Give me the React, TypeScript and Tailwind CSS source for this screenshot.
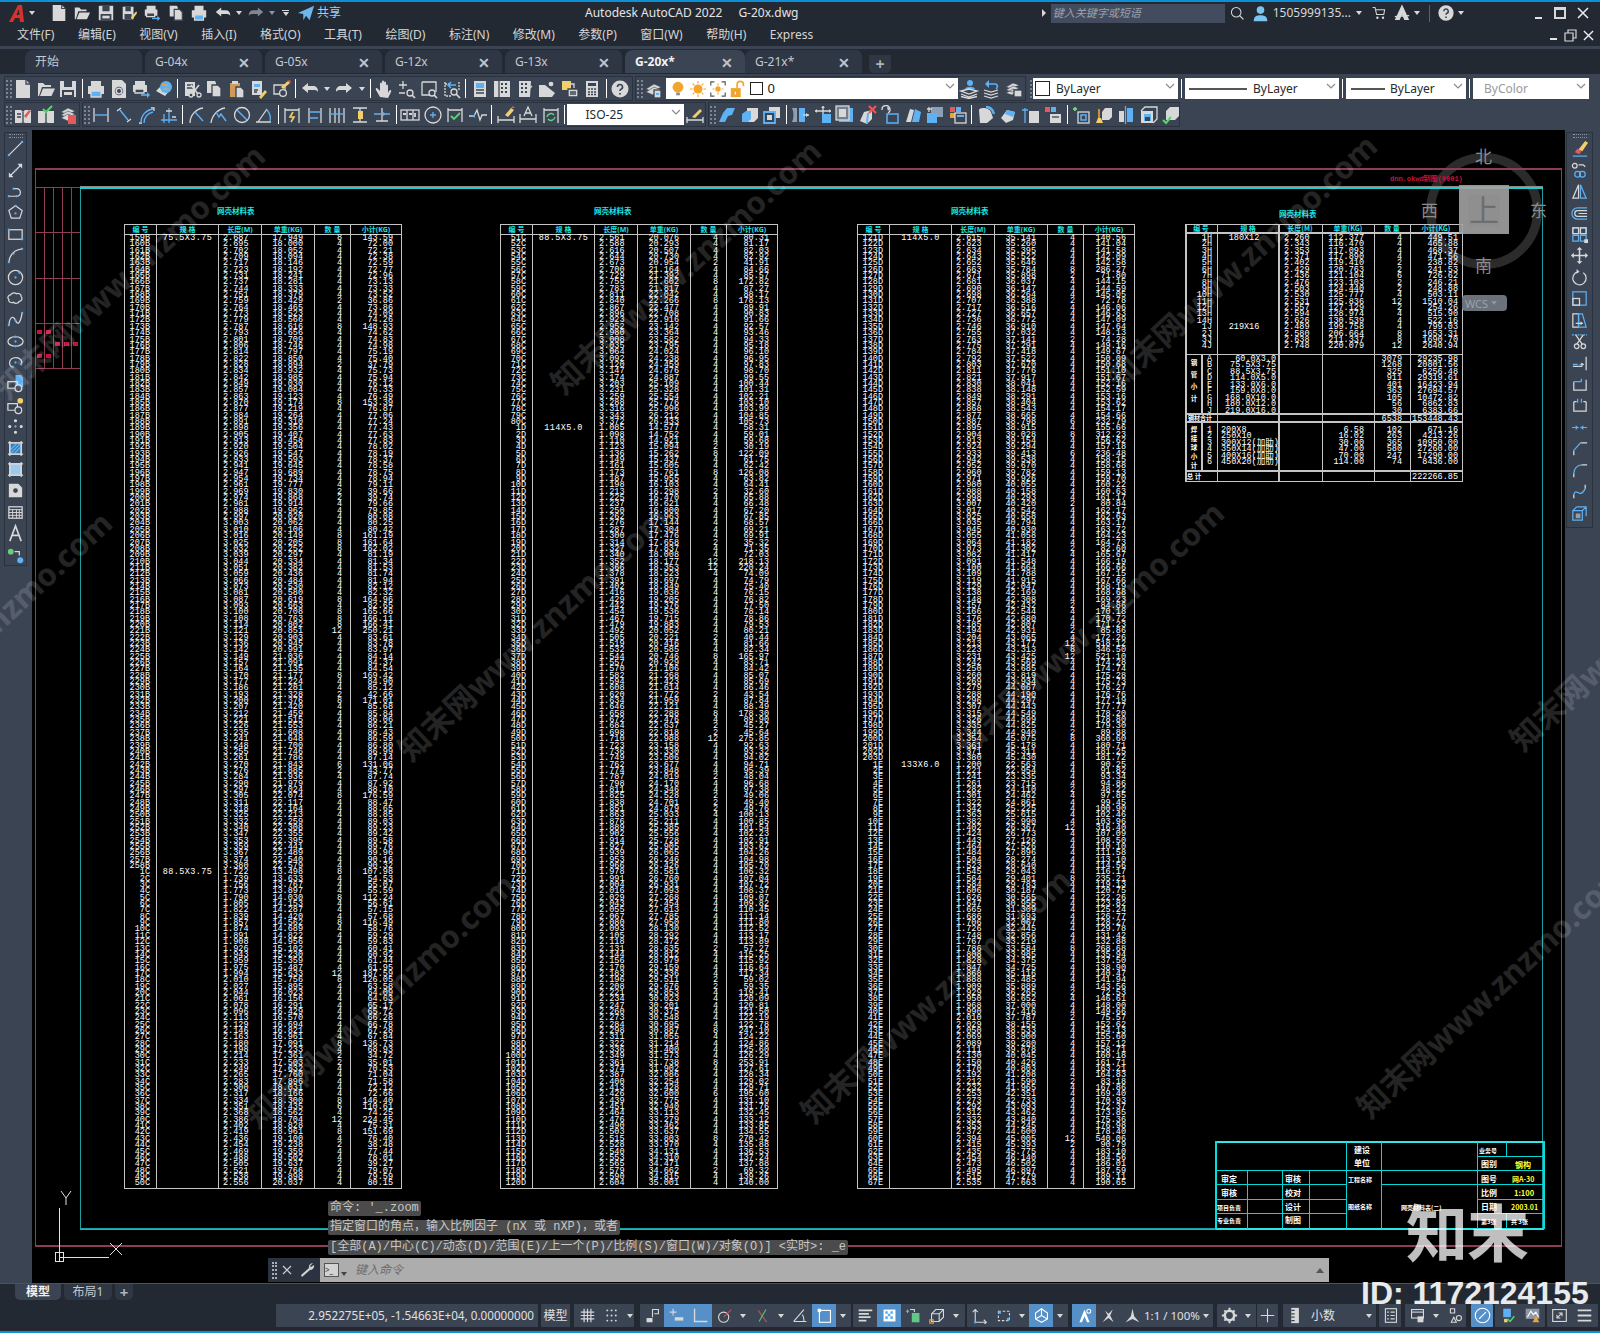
import type { ReactNode } from "react"

const g = "#d8d8d8"
const b = "#5eb1f3"
const o = "#f3a42c"
const y = "#f3cf6b"
const r = "#e5585b"
const dk = "#3b4453"

const Dot = ({ x, y: cy }: { x: number; y: number }) => <circle cx={x} cy={cy} r="1.2" fill={b} stroke="none" />
const page = "M3 1h10l4 4v14H3z"

const icons: Record<string, ReactNode> = {
  // draw
  line: <><path d="M3 17 17 3" /><Dot x={3} y={17} /><Dot x={17} y={3} /></>,
  xline: <><path d="M4 16 16 4" /><path d="M17 3h-5l5 5zM3 17h5l-5-5z" fill={g} stroke="none" /><Dot x={10} y={10} /></>,
  pline: <><path d="M3 15h8c5 0 6-8 0-8H8" /><Dot x={3} y={15} /><Dot x={11} y={15} /><Dot x={8} y={7} /></>,
  polygon: <><path d="m10 3 7 5-2.5 8h-9L3 8z" /><Dot x={10} y={3} /><Dot x={10} y={11} /></>,
  rect: <><rect x="3" y="5" width="14" height="10" /><Dot x={3} y={5} /><Dot x={17} y={15} /></>,
  arc: <><path d="M3 17C4 9 9 4 17 3" /><Dot x={3} y={17} /><Dot x={8} y={8} /><Dot x={17} y={3} /></>,
  circle: <><circle cx="10" cy="10" r="7.5" /><Dot x={10} y={10} /><Dot x={14} y={5} /></>,
  cloud: <path d="M5 6c2-3 5-2 6-1 2-1 5 0 5 3 2 2 0 5-2 5-1 2-4 3-6 1-3 1-6-1-5-3-2-2-1-4 2-5z" />,
  spline: <><path d="M3 16C4 6 8 6 10 11s5 4 7-8" /><Dot x={3} y={16} /><Dot x={10} y={11} /><Dot x={17} y={3} /></>,
  ellipse: <><ellipse cx="10" cy="10" rx="8" ry="5" /><Dot x={10} y={5} /><Dot x={10} y={15} /><Dot x={10} y={10} /></>,
  ellarc: <><path d="M7 15C2 13 3 6 9 5s9 4 7 7" /><Dot x={10} y={10} /><Dot x={7} y={15} /><Dot x={16} y={12} /></>,
  insert: <><path d="M10 1h6l2 3v10h-8z" fill={b} stroke="none" /><path d="M2 8h10v7H2z" /><circle cx="13" cy="15" r="3.5" fill={dk} /></>,
  block: <><path d="M2 8h10v7H2z" /><circle cx="13" cy="15" r="3.5" fill={dk} /><circle cx="15" cy="5" r="3" fill={y} stroke="none" /></>,
  point: <><circle cx="10" cy="4" r="1" fill={g} /><circle cx="4" cy="10" r="1" fill={g} /><circle cx="16" cy="10" r="1" fill={g} /><circle cx="10" cy="16" r="1" fill={g} /><Dot x={10} y={10} /></>,
  hatch: <><rect x="4" y="4" width="12" height="12" fill="#3c7db5" /><path d="m5 11 6-6M5 15 15 5M9 15l6-6" stroke={b} /><path d="M2 4h16M2 16h16M4 2v16M16 2v16" /></>,
  gradient: <><rect x="4" y="4" width="12" height="12" fill="#9cc9ee" /><path d="M2 4h16M2 16h16M4 2v16M16 2v16" /></>,
  region: <><path d="M3 3h10l4 4v10H3z" fill={g} stroke="none" /><circle cx="10" cy="10" r="2.5" fill={dk} stroke="none" /></>,
  table: <><rect x="3" y="4" width="14" height="12" /><path d="M3 7h14M3 10h14M3 13h14M7 7v9M11 7v9M14 7v9" strokeWidth="1" /></>,
  text: <path d="M4 18 10 2l6 16M6.5 12h7" strokeWidth="1.7" />,
  addsel: <><circle cx="5" cy="6" r="3" fill="#68cf79" stroke="none" /><circle cx="15" cy="15" r="3.2" fill={b} stroke="none" /><path d="M9 6h5v4" /></>,
  // modify
  erase: <><path d="m9 11 7-9 3 2-6 9z" fill={y} stroke="none" /><path d="m5 14 3-4 4 3-2 3z" fill={r} stroke="none" /><path d="M3 18h15" stroke={b} /></>,
  mcopy: <><circle cx="5" cy="5" r="2.5" /><path d="M9 4h5l2 2" /><circle cx="8" cy="14" r="3" stroke={b} /><circle cx="13" cy="14" r="3" stroke={b} /></>,
  mirror: <><path d="M9 3v14H3z" /><path d="M11 3v14h6z" stroke={b} /></>,
  offset: <><path d="M18 4H8a6 6 0 0 0 0 12h10" stroke={b} /><path d="M18 7H8a3 3 0 0 0 0 6h10M18 10H9" /></>,
  array: <><path d="M3 3h6v6H3zM11 3h6v6h-6zM3 11h6v6H3zM11 11h6v6h-6z" stroke={b} /><path d="M3 3h6v6H3zM11 3h6v6h-6z" /><path d="M15 15h4v4h-4z" fill={g} stroke="none" /></>,
  move: <><path d="M10 3v14M3 10h14" strokeWidth="1.6" /><path d="m10 1 3 3H7zM10 19l3-3H7zM1 10l3 3V7zM19 10l-3 3V7z" fill={g} stroke="none" /></>,
  rotate: <><path d="M14 5a7 7 0 1 1-6-1" /><path d="m7 1 3 3-3 2z" fill={g} stroke="none" /></>,
  scale: <><rect x="3" y="3" width="14" height="14" stroke={b} /><rect x="3" y="10" width="7" height="7" /></>,
  stretch: <><path d="M3 3h6v14H3z" /><path d="M9 3h4l4 14H9z" stroke={b} /><path d="M6 13h7" /><path d="m14 13-3-2v4z" fill={g} stroke="none" /></>,
  trim: <><path d="M2 3h16" stroke={b} strokeDasharray="2 1" /><path d="M6 3l7 10M14 3l-7 10" /><circle cx="14" cy="15" r="2.4" /><circle cx="7" cy="15" r="2.4" /></>,
  extend: <><path d="M3 11h5M10 11h4" stroke={b} /><path d="M17 3v14" /><path d="M3 13h10" /><path d="m15 11-3-2v4z" fill={g} stroke="none" /></>,
  breakpt: <><path d="M4 7v9h13V5" /><path d="M12 7V4" stroke={b} /><path d="M4 7h8" stroke={b} /></>,
  breakm: <><path d="M4 6v10h13V6" /><path d="M4 6h3M14 6h3" /><path d="M8 7V3M12 7V3" stroke={b} /></>,
  join: <><path d="M2 10h7M11 10h7" stroke={b} /><path d="m9 10-3-2.5v5zM11 10l3-2.5v5z" fill={b} stroke="none" /></>,
  chamfer: <><path d="M4 17v-5M11 4h7" /><path d="m4 12 7-8" stroke={b} /></>,
  fillet: <><path d="M4 17v-4M12 4h6" /><path d="M4 13a9 9 0 0 1 8-9" stroke={b} /></>,
  blend: <><path d="M4 17v-4M16 7V3" /><path d="M4 13c3-8 6 6 12-6" stroke={b} /></>,
  explode: <><path d="M3 7h10v10H3zM7 3h10v10M3 7l4-4M13 7l4-4" stroke={b} /><rect x="6" y="10" width="5" height="5" fill={g} stroke="none" opacity=".6" /></>,
  // standard
  new: <><path d={page} fill={g} stroke="none" /><path d="M13 1v4h4" stroke={dk} /></>,
  open: <><path d="M2 4h5l2 2h6v2H6l-3 9H2z" fill={g} stroke="none" /><path d="M7 9.500h12l-3.500 7.500H4z" fill={g} stroke="none" /></>,
  save: <><path d="M2 2h16v16H2z" fill={g} stroke="none" /><path d="M6 2h8v6H6zM4 11h12v7H4z" fill={dk} stroke="none" /><path d="M6 13h8v3H6z" fill={g} stroke="none" /></>,
  saveas: <><path d="M3 3h12v14H3z" fill={g} stroke="none" /><path d="M6 3h6v5H6zM5 11h8v6H5z" fill={dk} stroke="none" /><path d="m12 15 6-7 1 2-5 7z" fill={y} stroke="none" /></>,
  print: <><path d="M5 2h10v5H5zM2 7h16v8H2z" fill={g} stroke="none" /><path d="M5 12h10v6H5z" fill={b} stroke={g} /></>,
  preview: <><path d={page} fill={g} stroke="none" /><circle cx="10" cy="12" r="3.6" fill={dk} stroke={dk} /><circle cx="10" cy="12" r="2.8" fill="none" strokeWidth="1.6" /><path d="m13 15 3 3" strokeWidth="2" /></>,
  plot: <><path d="M4 2h10v4H4zM2 6h14v7H2z" fill={g} stroke="none" /><path d="M4 10h9v4H4z" fill={dk} /><path d="M10 16h8" stroke={b} strokeWidth="1.6" /><path d="m19 16-3-3v6z" fill={b} stroke="none" /></>,
  globe: <><path d="m2 12 6-6 9 4-6 7z" fill={g} stroke="none" /><circle cx="12" cy="8" r="6" fill={b} stroke="none" /><path d="M8 6c3-2 3 2 6 0M9 11c2-2 4 0 6-1" stroke={o} /></>,
  cut: <><rect x="3" y="3" width="10" height="14" fill={g} stroke="none" /><path d="M5 6h6M5 9h6" stroke={dk} /><path d="m9 6 7 9M17 6l-7 9" stroke={g} strokeWidth="1.6" /><circle cx="9" cy="16" r="2" fill={dk} /><circle cx="17" cy="16" r="2" fill={dk} /></>,
  copy: <><path d="M3 2h8l1 2v10H3z" fill={g} stroke="none" /><path d="M8 6h6l3 3v9H8z" fill={g} stroke={dk} /></>,
  paste: <><path d="M3 4h10v14H3z" fill="#d09a58" stroke="none" /><path d="M5 2h6v3H5z" fill={g} stroke="none" /><path d="M9 8h5l3 3v8H9z" fill={g} stroke={dk} /></>,
  matchp: <><path d="M3 2h10v14H3z" fill={g} stroke="none" /><path d="M5 5h6v3H5z" fill={b} stroke="none" /><path d="m10 18 6-7 2 2-6 7z" fill={y} stroke="none" /><path d="M5 11h4M5 13h3" stroke={dk} /></>,
  bedit: <><path d="M2 6h11v9H2z" /><circle cx="11" cy="14" r="3.4" fill={dk} /><path d="m9 8 7-6 2 2-7 6z" fill={y} stroke="none" /><path d="m15 2 3-1 1 3z" fill={r} stroke="none" /></>,
  undo: <path d="M2 9 8 4v3h5c3 0 5 2 5 5v1c-1-2-3-2-5-2H8v3z" fill={g} stroke="none" />,
  redo: <path d="M18 9 12 4v3H7c-3 0-5 2-5 5v1c1-2 3-2 5-2h5v3z" fill={g} stroke="none" />,
  undodim: <path d="M18 9 12 4v3H7c-3 0-5 2-5 5v1c1-2 3-2 5-2h5v3z" fill="#7e8794" stroke="none" />,
  pan: <path d="M6 18 2 11c-1-2 1-3 2-1l2 2V5c0-2 2-2 2 0v3-5c0-2 2-2 2 0v5-4c0-2 2-2 2 0v5-2c0-2 2-2 2 0v7l1-2c1-2 3-1 2 1l-3 6z" fill={g} stroke="none" />,
  zoomrt: <><path d="M2 6h8M6 2v8M2 14h6" /><circle cx="13" cy="14" r="3" /><path d="m15 16 3 3" strokeWidth="1.7" /></>,
  zoomwin: <><path d="M3 3h14v10" /><path d="M3 3v13h8" /><circle cx="13" cy="14" r="3" /><path d="m15 16 3 3" strokeWidth="1.7" /></>,
  zoomprev: <><path d="M3 5h5M3 3v14h7M17 3v8" strokeDasharray="2 1" /><path d="M14 6H7M9 3 6 6l3 3" stroke={b} strokeWidth="1.6" /><circle cx="12" cy="13" r="3" /><path d="m14 15 4 4" strokeWidth="1.7" /></>,
  props: <><rect x="4" y="2" width="12" height="16" fill={g} stroke="none" /><path d="M6 4h8v5H6z" fill={b} stroke="none" /><path d="M6 11h8M6 14h8" stroke={dk} /></>,
  design: <><rect x="2" y="2" width="16" height="16" fill={g} stroke="none" /><path d="M7 2v16" stroke={dk} /><path d="M9 5h2M13 5h2M9 9h2M13 9h2M9 13h2M13 13h2" stroke={dk} strokeWidth="2" /></>,
  tool: <><path d="M4 2h12l-1 16H4z" fill={g} stroke="none" /><path d="M6 5h2M10 5h2M6 9h2M10 9h2M6 13h2M10 13h2" stroke={dk} strokeWidth="2" /><path d="m14 10 3-3" stroke={g} /></>,
  sheet: <><path d="M2 6h6l10 8-3 4H2z" fill={g} stroke="none" /><circle cx="14" cy="5" r="3" fill={g} stroke={dk} /></>,
  markup: <><path d="M2 2h9v9H2z" fill={y} stroke="none" /><path d="M8 10h10v8H8z" fill={g} stroke={dk} /><path d="M10 5h4v4" /><path d="M10 13h6M10 15h6" stroke={dk} /></>,
  calc: <><rect x="4" y="2" width="12" height="16" fill={g} stroke="none" /><path d="M6 4h8v3H6z" fill={dk} stroke="none" /><path d="M6 10h2M9 10h2M12 10h2M6 13h2M9 13h2M12 13h2M6 15.500h2M9 15.500h2M12 15.500h2" stroke={dk} strokeWidth="1.500" /></>,
  help: <><circle cx="10" cy="10" r="8.500" fill={g} stroke="none" /><path d="M7.500 8a2.500 2.500 0 1 1 3.500 2.300c-.8.400-1 .8-1 1.700" stroke={dk} strokeWidth="1.700" /><path d="M10 14v1.600" stroke={dk} strokeWidth="1.800" /></>,
  // layer
  layer: <><path d="m2 10 8-5 7 3-8 5z" fill={g} stroke={dk} strokeWidth=".6" /><path d="m2 13 8-5 7 3-8 5z" fill={g} stroke={dk} strokeWidth=".6" /><rect x="10" y="11" width="7" height="8" fill={g} stroke={dk} /><path d="M12 15h3" stroke={b} strokeWidth="2" /></>,
  lyrme: <><circle cx="11" cy="4" r="3" fill={b} stroke="none" /><path d="M6 10c1-3 9-3 10 0z" fill={b} stroke="none" /><path d="m2 12 8-2 8 2-8 3zM2 15l8 3 8-3M2 17.500l8 2 8-2" stroke={g} /></>,
  lyrprev: <><path d="M8 5h6c3 0 3 4 1 5" stroke={b} strokeWidth="1.600" /><path d="m8 1-4 4 4 4z" fill={b} stroke="none" /><path d="m3 11 7 2 7-2M3 14l7 2 7-2M3 17l7 2 7-2" stroke={g} /></>,
  lyrlock: <><path d="m2 8 7-4 6 2-7 4z" fill={g} stroke={dk} strokeWidth=".6" /><path d="m2 11 7-4 6 2-7 4zM2 14l7-4 6 2-7 4z" fill={g} stroke={dk} strokeWidth=".6" /><rect x="10" y="11" width="8" height="7" fill={g} stroke={dk} /></>,
  bulb: <><circle cx="10" cy="8" r="6" fill={o} stroke="none" /><path d="M8 14h4v3H8z" fill="#8a8a8a" stroke="none" /></>,
  sun: <><circle cx="10" cy="10" r="5" fill={o} stroke="none" /><path d="M10 1v3M10 16v3M1 10h3M16 10h3M4 4l2 2M14 14l2 2M4 16l2-2M14 6l2-2" stroke={o} /></>,
  vpfrz: <><path d="M2 6V2h4M14 2h4v4M2 14v4h4M14 18h4v-4" stroke="#555" /><circle cx="10" cy="10" r="3" fill={o} stroke="none" /><path d="M10 4v2M10 14v2M4 10h2M14 10h2" stroke={o} /></>,
  lock: <><rect x="2" y="9" width="11" height="10" fill={o} stroke="none" /><path d="M9 9V5a3.500 3.500 0 0 1 7 0v2" stroke={o} strokeWidth="1.800" /><path d="M7 13v3" stroke="#fff" /></>,
  // dims
  matchm: <><path d="M2 5h6l2 2 2-2h6v13h-6l-2-1-2 1H2z" fill={g} stroke="none" /><path d="M10 7v10" stroke={dk} /><path d="m11 11 5-6 2 1-5 7z" fill={r} stroke="none" /><path d="M4 9h4M4 12h4" stroke={dk} /></>,
  checkm: <><path d="M2 6h6l2 2 2-2h6v12h-6l-2-1-2 1H2z" fill={g} stroke="none" /><path d="M10 8v9" stroke={dk} /><path d="m7 4 3 3 6-6" stroke="#57d66b" strokeWidth="2" /></>,
  lstate: <><path d="m3 7 7-4 7 3-7 4z" fill={g} stroke={dk} strokeWidth=".6" /><path d="m3 10 7-4 7 3-7 4z" fill={g} stroke={dk} strokeWidth=".6" /><path d="m3 13 7-4 7 3-7 4z" fill={g} stroke={dk} strokeWidth=".6" /><rect x="10" y="10" width="8" height="9" fill={r} stroke="none" /></>,
  dimlin: <><path d="M3 3v14M17 3v14" /><path d="M4 10h12" stroke={b} strokeWidth="1.400" /></>,
  dimali: <><path d="m3 6 4-3M13 17l4-3" /><path d="m6 5 8 10" stroke={b} strokeWidth="1.400" /></>,
  dimarc: <><path d="M3 18h3M15 3h3v3" /><path d="M5 18C5 10 10 5 17 4" stroke={b} strokeWidth="1.400" /><path d="M8 18C8 12 12 8 17 7" stroke={b} strokeWidth="1.400" /></>,
  dimord: <><path d="M2 15h16M10 3v15M5 9v9" stroke={b} /><path d="M7 6h6M13 12h4" /></>,
  dimrad: <><path d="M3 18C3 10 9 4 16 3" /><path d="m8 7 8 9" stroke={b} strokeWidth="1.400" /></>,
  dimjog: <><path d="M2 18C3 10 9 4 16 3" /><path d="m7 7 3 5 2-3 5 7" stroke={b} strokeWidth="1.400" /></>,
  dimdia: <><circle cx="10" cy="10" r="7.500" /><path d="m5 5 10 10" stroke={b} strokeWidth="1.400" /></>,
  dimang: <><path d="M2 17h15M13 4 4 17" /><path d="M13 5c3 3 4 8 3 11" stroke={b} strokeWidth="1.400" /></>,
  dimq: <><path d="M3 3v15M17 3v15M3 5h14" /><path d="m11 7-3 5h4l-3 5" stroke={y} strokeWidth="1.600" /></>,
  dimbase: <><path d="M4 3v15M16 3v15" /><path d="M4 7h12M4 13h9" stroke={b} strokeWidth="1.400" /></>,
  dimcont: <><path d="M3 3v15M8 3v15M12 3v15M17 3v15" /><path d="M3 9h14" stroke={b} strokeWidth="1.400" /></>,
  dimspace: <><path d="M3 3h14M3 17h14" /><path d="M10 3v14" /><rect x="8" y="6" width="5" height="8" fill={y} stroke="none" /></>,
  dimbreak: <><path d="M2 9h7M13 9h5" stroke={b} strokeWidth="1.400" /><path d="M10 3v10M4 16h12M10 13v3" /><path d="m14 9-3-2v4z" fill={b} stroke="none" /></>,
  tol: <><rect x="1" y="5" width="18" height="10" /><path d="M7 5v10M13 5v10" /><path d="M3 9h3M9 9h3M15 8v4" strokeWidth="1.800" /></>,
  center: <><circle cx="10" cy="10" r="8" /><path d="M10 7v6M7 10h6" stroke={b} /></>,
  inspect: <><path d="M3 3v14M17 3v14M3 5h14" /><path d="m6 11 3 3 6-6" stroke="#57d66b" strokeWidth="1.800" /></>,
  jogline: <><path d="M1 11h5l3-6 3 10 2-5h5" /><path d="m4 11 3-2v4z" fill={b} stroke="none" /></>,
  dimed: <><path d="M2 11v7M18 11v7M2 15h16" /><path d="m9 10 6-7 3 2-6 7z" fill={y} stroke="none" /><path d="m15 3 2-2 2 2z" fill={r} stroke="none" /></>,
  dimtxt: <><path d="M2 9v9M18 9v9M2 14h16" /><path d="m6 11 4-9 4 9M7.500 8h5" /></>,
  dimup: <><path d="M3 3v15M17 3v15M3 5h14" /><path d="M6 12a4 4 0 0 1 7-2M14 12a4 4 0 0 1-7 2" stroke="#5fd47a" strokeWidth="1.500" /></>,
  dimsty: <><path d="M2 12v6M18 12v6M2 15h16" /><path d="m7 12 8-8 2 2-7 7z" fill={y} stroke="none" /></>,
  // 3d edit
  uni1: <path d="M2 17 6 8l4-5h8l-3 7-4 1-3 6z" fill={b} stroke="none" />,
  uni2: <><path d="M7 3h11v10l-4 4H7z" fill={g} stroke="none" /><path d="M2 17V9l4-3h5v8l-3 3z" fill={b} stroke="none" /></>,
  uni3: <><path d="M7 2h11v11H7z" fill={g} stroke="none" /><path d="M2 7h11v11H2z" fill={dk} stroke={b} strokeWidth="1.800" /><rect x="5" y="10" width="5" height="5" fill={g} stroke="none" /></>,
  stretchb: <><path d="M2 3c2 4 2 10 0 14h5V3z" fill="#8ba0b6" stroke="none" /><path d="M9 3h6v14H9z" fill={b} stroke="none" /><path d="M13 10h6" /><path d="m19 10-3-2v4z" fill={g} stroke="none" /></>,
  movef: <><path d="M2 6h16M10 1v10" /><path d="m10 1 2 2H8zM18 6l-2 2V4zM2 6l2 2V4z" fill={g} stroke="none" /><rect x="9" y="9" width="9" height="9" fill={b} stroke="none" /></>,
  scalef: <><rect x="4" y="3" width="14" height="14" fill={b} stroke="none" /><rect x="1" y="1" width="13" height="14" fill="#777f8c" stroke={g} /><rect x="4" y="4" width="7" height="8" fill={g} stroke="none" /></>,
  delf: <><path d="m2 16 4-9 8-2v9l-5 5z" fill={g} stroke="none" /><path d="M10 8 9 18" stroke={b} strokeWidth="2" /><path d="m11 1 7 7M18 1l-7 7" stroke={r} strokeWidth="2.200" /></>,
  rotf: <><path d="M2 5a4 4 0 1 1 6 3" /><path d="m7 2 3 1-2 3z" fill={g} stroke="none" /><rect x="7" y="9" width="11" height="9" fill={dk} stroke={b} strokeWidth="1.500" /></>,
  facetap: <><path d="m3 17 4-13 4 1-3 12z" fill={g} stroke="none" /><path d="m9 17 3-13 6 3-2 10z" fill={b} stroke="none" /></>,
  copyf: <><path d="M6 2h12v10H6z" fill="#8ba0b6" stroke="none" /><path d="M2 8h10v10H2z" fill={b} stroke="none" /><path d="M2 4h5M4 2v5" /></>,
  colorf: <><path d="M2 2h5v5H2z" fill={r} stroke="none" /><path d="M8 2h5v5H8z" fill={b} stroke="none" /><path d="M2 8h5v5H2z" fill={o} stroke="none" /><rect x="7" y="8" width="11" height="10" fill={dk} stroke={g} /><path d="M9 11h7" stroke={b} strokeWidth="2" /></>,
  imprint: <><path d="M3 5c0-3 10-3 12 2l2 6-6 5H4z" fill={g} stroke="none" /><path d="M10 2c4 0 7 3 8 7" stroke={b} strokeWidth="2.400" /></>,
  coloreb: <><path d="m3 13 6-8 8 2-2 8-7 3z" fill={g} stroke="none" /><path d="m9 5 8 2-2 5-8-3z" fill={b} stroke="none" /></>,
  copye: <><path d="M4 3v15M1 5h6" stroke={b} /><path d="M8 6h10v12H8z" fill={g} stroke="none" /></>,
  imprf: <><path d="M2 2h5v5H2z" fill={r} stroke="none" /><path d="M8 2h5v5H8z" fill={b} stroke="none" /><rect x="7" y="9" width="11" height="9" fill={g} stroke="none" /><path d="M9 12h7" stroke={dk} /></>,
  sep3d: <><path d="M4 2v4M2 4h4" stroke="#67d871" strokeWidth="1.800" /><rect x="7" y="7" width="11" height="11" /><rect x="10" y="10" width="5" height="5" stroke={b} strokeWidth="1.500" /></>,
  clean: <><path d="m8 7 3-4h7v9l-3 3H8z" fill={g} stroke="none" /><path d="M5 4v9" stroke={o} strokeWidth="1.600" /><path d="M2 18l2-5h3l2 5z" fill={y} stroke="none" /></>,
  separate: <><path d="M3 6h5v11H3z" fill={g} stroke="none" /><path d="M11 3h6v14h-6z" fill={b} stroke="none" /><path d="M9.500 1v18" stroke={b} /></>,
  shell: <><path d="M2 6h12v12H2z" fill={g} stroke="none" /><path d="m2 6 4-4h12v12l-4 4" /><path d="M5 9h7v7H5z" fill={b} stroke="none" /><path d="M6 12h5v4H6z" fill={dk} stroke="none" /></>,
  checks: <><path d="m5 6 4-4h9v9l-4 4H5z" fill={g} stroke="none" /><path d="m2 15 3 3 5-6" stroke="#57d66b" strokeWidth="2" /></>,
  // title / status
  share: <path d="M1 10 19 2l-5 16-4-5-3 5v-7z" fill="#6fb6ea" stroke="none" />,
  search: <><circle cx="9" cy="9" r="6" /><path d="m13 13 5 5" strokeWidth="1.600" /></>,
  user: <><circle cx="10" cy="6" r="4.500" fill="#7cc4f0" stroke="none" /><path d="M2 19c0-6 4-7 8-7s8 1 8 7z" fill="#7cc4f0" stroke="none" /></>,
  cart: <><path d="M2 3h3l2 9h9l1-6H6" /><circle cx="8" cy="16" r="1.500" fill={g} stroke="none" /><circle cx="15" cy="16" r="1.500" fill={g} stroke="none" /></>,
  adsk: <path d="M10 2 3 17h4l3-7 3 7h4zM2 14l16-1" fill={g} stroke={g} />,
  grid: <path d="M6 2v16M10 2v16M14 2v16M2 6h16M2 10h16M2 14h16" strokeWidth="1.400" />,
  snap: <path d="M5 4h.1M10 4h.1M15 4h.1M5 10h.1M10 10h.1M15 10h.1M5 16h.1M10 16h.1M15 16h.1" strokeWidth="2.200" strokeLinecap="round" />,
  infer: <><path d="M3 13h7v5H3z" fill={g} stroke="none" /><path d="M10 12V3h7v5h-5" /></>,
  dyn: <><path d="M2 6h8M6 2v8" /><path d="M8 12h10v4H8z" fill={g} stroke="none" /></>,
  ortho: <path d="M3 2v15h15" strokeWidth="1.600" />,
  polar: <><circle cx="9" cy="12" r="6" /><path d="M9 12 18 3" stroke="#c7524f" /></>,
  iso: <><path d="m5 4 10 14" stroke="#c7524f" /><path d="m14 3-8 14" stroke="#58c76e" /></>,
  angle: <path d="M2 17h15M14 3 2 17M12 9c2 2 2 5 2 8" />,
  objsnap: <><rect x="4" y="4" width="13" height="14" stroke="#fff" /><path d="M2 2h4v4H2z" fill="#fff" stroke="none" /></>,
  lweight: <path d="M2 4h16M2 8h12M2 12h14M2 16h9" strokeWidth="2" />,
  transp: <><rect x="3" y="3" width="14" height="14" fill="#fff" stroke="none" /><path d="M5 5h3v3H5zM11 5h3v3h-3zM8 8h3v3H8zM5 11h3v3H5zM11 11h3v3h-3z" fill={b} stroke="none" /></>,
  selcycle: <><rect x="8" y="7" width="9" height="11" fill="#62c887" stroke="none" /><path d="M3 3v4M1 5h4" stroke="#62c887" /><path d="M6 3h5v3" /></>,
  g3d: <><path d="M3 8h9v9H3z" /><path d="m3 8 5-5h9v9l-5 5M12 8l5-5" /><rect x="1" y="15" width="4" height="4" stroke={o} /></>,
  ucsd: <><path d="M5 18V3M5 18h13M2 6l3-3 3 3M15 15l3 3-3 3" /><circle cx="5" cy="18" r="1.400" fill={b} stroke="none" /></>,
  gizmo: <><path d="M4 5h13v11H4z" strokeDasharray="3 2" /><path d="M4 5h3v3H4zM14 13h3v3h-3z" fill={b} stroke="none" /></>,
  gizmoa: <><path d="m10 2 7 5v7l-7 4-7-4V7z" stroke="#fff" /><path d="M10 10V2M10 10l7 4M10 10l-7 4" stroke="#fff" /></>,
  annoa: <><path d="M10 3 4 18h3l3-7 3 7h3z" fill="#fff" stroke="none" /><circle cx="15" cy="5" r="2.300" stroke="#fff" /></>,
  anno: <><path d="m3 18 6-8-3-6 4 4 5-5-3 7 4 8-6-5z" fill={g} stroke="none" /></>,
  annoc: <path d="M10 2 8 11 2 18l8-4 8 4-6-7z" fill={g} stroke="none" />,
  gear: <><circle cx="10" cy="10" r="5.500" strokeWidth="3" /><path d="M10 1v3M10 16v3M1 10h3M16 10h3M4 4l2 2M14 14l2 2M4 16l2-2M14 6l2-2" strokeWidth="2.400" /></>,
  plus: <path d="M10 1v18M1 10h18" strokeWidth="1.500" />,
  units: <><rect x="5" y="1" width="9" height="18" fill={g} stroke="none" /><path d="M5 4h4M5 8h4M5 12h4M5 16h4" stroke={dk} strokeWidth="1.500" /></>,
  qprop: <><rect x="4" y="2" width="13" height="16" /><path d="M6 6h2M10 6h5M6 10h2M10 10h5M6 14h2M10 14h5" /></>,
  lockui: <><rect x="3" y="3" width="14" height="10" /><path d="M3 6h14" /><rect x="10" y="11" width="7" height="7" fill={g} stroke="none" /></>,
  isolate: <><path d="M4 2h5v5H4z" /><circle cx="14" cy="13" r="3" /><path d="m5 18 3-6 3 6z" /></>,
  hwacc: <><circle cx="10" cy="10" r="8.500" stroke="#fff" /><path d="m6 14 8-8" stroke="#fff" strokeWidth="1.500" /></>,
  iconic: <><path d="M5 2h9v10H5z" fill={b} stroke="none" /><path d="M6 14h4v4H6z" fill={y} stroke="none" /><path d="m10 14 3 3 5-6" stroke="#57d66b" strokeWidth="1.800" /></>,
  perf: <><path d="M2 2h16v12H2z" fill="#8f97a3" stroke="none" /><path d="m4 12 4-7 3 4 3-3 3 6" stroke="#fff" /><path d="m10 18 4-7 4 7z" fill={o} stroke="none" /></>,
  fullscr: <><rect x="2" y="3" width="16" height="14" /><path d="m7 13 6-6M9 7h4v4M7 9v4h4" /></>,
  menu: <path d="M2 4h16M2 10h16M2 16h16" strokeWidth="2.200" />,
}

const Ic = ({ n, s = 18 }: { n: string; s?: number }) => (
  <svg width={s} height={s} viewBox="0 0 20 20" fill="none" stroke={g} strokeWidth="1.300">
    {icons[n]}
  </svg>
)

const Caret = ({ dim }: { dim?: boolean }) => (
  <span className={dim ? "block h-0 w-0 border-x-[3.5px] border-t-[4px] border-x-transparent border-t-[#8a93a0]" : "block h-0 w-0 border-x-[3.5px] border-t-[4px] border-x-transparent border-t-[#d8d8d8]"} />
)

const Chevron = () => (
  <svg width="10" height="7" viewBox="0 0 10 7" fill="none" stroke="#8b8b8b" strokeWidth="1.200">
    <path d="m1 1 4 4 4-4" />
  </svg>
)

const Handle = () => <span className="h-[18px] w-[6px] shrink-0 border-x-2 border-dotted border-x-[#7c8593]" />

// "|" is a separator, "^" a small dropdown arrow
const Tools = ({ items }: { items: string[] }) => (
  <>
    {items.map((n, i) =>
      n === "|" ? (
        <span key={i} className="flex h-full w-[5.5px] shrink-0 items-center justify-center">
          <span className="h-[19px] w-px bg-white" />
        </span>
      ) : n === "^" ? (
        <span key={i} className="flex w-[12px] shrink-0 items-center justify-center">
          <Caret />
        </span>
      ) : (
        <span key={i} className="flex w-[22.5px] shrink-0 items-center justify-center">
          <Ic n={n} s={20} />
        </span>
      ),
    )}
  </>
)

const Group = ({ className, children }: { className: string; children: ReactNode }) => (
  <div className={`flex h-[25px] items-center border border-[#2a3240] ${className}`}>{children}</div>
)

const Combo = ({ className, children }: { className: string; children: ReactNode }) => (
  <div className={`relative flex h-[21px] shrink-0 items-center bg-white text-[12px] text-[#2a2a2a] ${className}`}>
    {children}
    <span className="absolute right-[3px] top-[5px]">
      <Chevron />
    </span>
  </div>
)

const tabs = ["开始", "G-04x", "G-05x", "G-12x", "G-13x", "G-20x*", "G-21x*"]
const menus = ["文件(F)", "编辑(E)", "视图(V)", "插入(I)", "格式(O)", "工具(T)", "绘图(D)", "标注(N)", "修改(M)", "参数(P)", "窗口(W)", "帮助(H)", "Express"]

// deterministic table data, the weight column is length x kg/m
let seed = 7
const rnd = () => {
  seed = (seed * 16807) % 2147483647
  return seed / 2147483647
}

type Seg = { mark: string; from: number; count: number; start: number; end: number; kg: number }

const makeRows = (segs: Seg[]) => {
  const ids: string[] = []
  const lens: string[] = []
  const wts: string[] = []
  const nums: string[] = []
  const tots: string[] = []
  for (const s of segs) {
    for (let i = 0; i < s.count; i++) {
      const len = s.start + ((s.end - s.start) * i) / (s.count - 1) + rnd() * 0.002
      const p = rnd()
      const n = p < 0.78 ? 4 : p < 0.88 ? 2 : p < 0.96 ? 8 : p < 0.98 ? 12 : 6
      ids.push(`${s.from + i}${s.mark}`)
      lens.push(len.toFixed(3))
      wts.push((len * s.kg).toFixed(3))
      nums.push(String(n))
      tots.push((len * s.kg * n).toFixed(2))
    }
  }
  return { ids, lens, wts, nums, tots }
}

const specLines = (at: [number, string][]) => {
  const lines = Array.from({ length: 150 }, () => "")
  for (const [i, s] of at) lines[i] = s
  return lines.join("\n")
}

const tableData = [
  {
    pos: "left-[124px]",
    rows: makeRows([
      { mark: "B", from: 159, count: 100, start: 2.687, end: 3.38, kg: 6.68 },
      { mark: "C", from: 1, count: 50, start: 1.72, end: 2.554, kg: 7.84 },
    ]),
    specs: specLines([[0, "75.5X3.75"], [100, "88.5X3.75"]]),
  },
  {
    pos: "left-[500px]",
    rows: makeRows([
      { mark: "C", from: 51, count: 30, start: 2.559, end: 3.37, kg: 7.84 },
      { mark: "D", from: 1, count: 120, start: 1.083, end: 2.603, kg: 13.44 },
    ]),
    specs: specLines([[0, "88.5X3.75"], [30, "114X5.0"]]),
  },
  {
    pos: "left-[857px]",
    rows: makeRows([
      { mark: "D", from: 121, count: 83, start: 2.614, end: 3.38, kg: 13.44 },
      { mark: "E", from: 1, count: 67, start: 1.2, end: 2.534, kg: 18.8 },
    ]),
    specs: specLines([[0, "114X5.0"], [83, "133X6.0"]]),
  },
]

const Mono = "font-['Liberation_Mono','Noto_Sans_CJK_SC',monospace]"

const HeadCell = ({ w, label }: { w: string; label: string }) => (
  <div className={`flex h-[9px] items-center justify-center border-r border-[#c4c4c4] text-[7px] font-bold leading-none text-[#19e6e6] last:border-r-0 ${w}`}>
    {label}
  </div>
)

const Col = ({ w, align, text }: { w: string; align: string; text: string }) => (
  <div className={`whitespace-pre border-r border-[#c4c4c4] text-[8.5px] leading-[6.34px] text-white last:border-r-0 ${Mono} ${w} ${align}`}>
    {text}
  </div>
)

const MatTable = ({ pos, data }: { pos: string; data: (typeof tableData)[number] }) => (
  <div className={`absolute top-[223px] flex h-[965px] w-[278px] flex-col border border-[#c4c4c4] ${pos}`}>
    <div className="flex border-b border-[#c4c4c4]">
      <HeadCell w="w-[32px]" label="编 号" />
      <HeadCell w="w-[62px]" label="规 格" />
      <HeadCell w="w-[43px]" label="长度(M)" />
      <HeadCell w="w-[53px]" label="单重(KG)" />
      <HeadCell w="w-[36px]" label="数 量" />
      <HeadCell w="flex-1" label="小计(KG)" />
    </div>
    <div className="flex flex-1">
      <Col w="w-[32px]" align="pr-[6px] text-right" text={data.rows.ids.join("\n")} />
      <Col w="w-[62px]" align="text-center tracking-[0.4px]" text={data.specs} />
      <Col w="w-[43px]" align="pl-[4px] text-left" text={data.rows.lens.join("\n")} />
      <Col w="w-[53px]" align="pr-[11px] text-right" text={data.rows.wts.join("\n")} />
      <Col w="w-[36px]" align="pr-[8px] text-right" text={data.rows.nums.join("\n")} />
      <Col w="flex-1" align="pr-[8px] text-right" text={data.rows.tots.join("\n")} />
    </div>
  </div>
)

// small steel table top right: id, spec, length, weight, count, total
const t4Rows: [string, string, string, string, string, string][] = [
  ["1H", "180X12", "2.260", "112.377", "4", "449.51"],
  ["2H", "", "2.343", "116.470", "4", "465.88"],
  ["3H", "", "2.353", "117.093", "4", "468.37"],
  ["4H", "", "2.371", "117.890", "4", "471.56"],
  ["5H", "", "2.402", "119.410", "2", "238.82"],
  ["6H", "", "2.429", "120.763", "2", "241.53"],
  ["7H", "", "2.436", "121.104", "6", "726.62"],
  ["8H", "", "2.476", "123.103", "2", "246.21"],
  ["9H", "", "2.503", "124.440", "2", "248.88"],
  ["10H", "", "2.530", "125.777", "4", "503.11"],
  ["11H", "", "2.531", "125.836", "12", "1510.04"],
  ["12H", "", "2.557", "127.129", "2", "254.26"],
  ["13H", "", "2.594", "128.974", "4", "515.90"],
  ["14H", "", "2.626", "130.539", "4", "522.16"],
  ["1J", "219X16", "2.489", "199.758", "4", "799.03"],
  ["2J", "", "2.580", "206.664", "8", "1653.31"],
  ["3J", "", "2.638", "211.337", "8", "1690.70"],
  ["4J", "", "2.748", "220.079", "12", "2640.94"],
]
const t4Sum: [string, string, string, string][] = [
  ["A", "60.0X3.0", "3079", "29235.98"],
  ["B", "75.5X3.75", "1268", "20801.56"],
  ["C", "88.5X3.75", "325", "6256.48"],
  ["D", "114.0X5.0", "911", "29319.61"],
  ["E", "133.0X6.0", "401", "16423.94"],
  ["F", "159.0X8.0", "363", "27694.57"],
  ["G", "168.0X10.0", "105", "10472.82"],
  ["H", "180.0X12.0", "56", "6862.83"],
  ["J", "219.0X16.0", "30", "6383.66"],
]
const t4Balls: [string, string, string, string, string][] = [
  ["1", "200X8", "6.58", "102", "671.16"],
  ["2", "250X10", "16.02", "263", "4213.26"],
  ["3", "300X12(加肋)", "30.00", "365", "10950.00"],
  ["4", "350X14(加肋)", "47.00", "580", "27260.00"],
  ["5", "400X16(加肋)", "70.00", "247", "17290.00"],
  ["6", "450X20(加肋)", "114.00", "74", "8436.00"],
]

const red = "#8d3d55"
const cyan = "#19cfcf"
const gray = "#c4c4c4"
const mono = "Liberation Mono, Noto Sans CJK SC, monospace"
const cjk = "Noto Sans CJK SC, sans-serif"

const L = ({ d, c, w = 1 }: { d: string; c: string; w?: number }) => <path d={d} stroke={c} strokeWidth={w} fill="none" shapeRendering="crispEdges" />

const Txt = ({ x, y: ty, t, c = "#fff", s = 8, a = "start" }: { x: number; y: number; t: string; c?: string; s?: number; a?: "start" | "middle" | "end" }) => (
  <text x={x} y={ty} fill={c} fontSize={s} fontFamily={cjk} fontWeight="700" textAnchor={a}>
    {t}
  </text>
)

const M = ({ x, y: ty, t, a = "end" }: { x: number; y: number; t: string; a?: "start" | "middle" | "end" }) => (
  <text x={x} y={ty} fill="#fff" fontSize="8.5" fontFamily={mono} textAnchor={a}>
    {t}
  </text>
)

const CadLines = () => (
  <svg className="absolute left-0 top-0" width="1600" height="1333">
    {/* sheet frames */}
    <L d="M35.500 168h1526v1077H35.500z" c={red} w={1.500} />
    <L d="M35 186h45M35 231h45M35 277h45M35 322h45M35 367h45M44.500 186v181M53.500 186v181M62.500 186v181M71.500 186v181" c={red} />
    <L d="M80.500 186v1042M1542.500 186v1042" c="#1c9ea3" w={1.500} />
    <L d="M80 185.500h1463" c="#8a8a8a" />
    <L d="M80 187h1463" c={cyan} w={2} />
    <L d="M80 1227h1136" c="#14a4a8" />
    <L d="M80 1228.500h1136" c="#8a8a8a" />
    {/* left strip marks */}
    {[[37, 329], [46, 329], [55, 341], [64, 341], [73, 341], [37, 353], [46, 353]].map(([x, ty], i) => (
      <rect key={i} x={x} y={ty} width="5" height="4" fill="#c4123f" />
    ))}
    <text x="1390" y="180" fill="#c8123f" fontSize="7" fontFamily={mono} fontWeight="700">
      dnn.okwd制图(0001)
    </text>

    {/* right hand table */}
    <L d="M1186 223.500h277M1186 232h277M1186 353.500h277M1186 413h277M1186 421h277M1186 470h277M1186 480.500h277" c={gray} w={1.300} />
    <L d="M1186 223v258M1217.500 223v258M1279 223v258M1322.500 223v258M1374.500 223v258M1410.500 223v258M1462.500 223v258M1202 353.500v59M1202 421v49" c={gray} w={1.200} />
    {[["编 号", 1201], ["规 格", 1248], ["长度(M)", 1300], ["单重(KG)", 1348], ["数 量", 1392], ["小计(KG)", 1436]].map(([t, x]) => (
      <Txt key={t as string} x={x as number} y={230} t={t as string} c="#19e6e6" s={7} a="middle" />
    ))}
    {t4Rows.map((row, i) => {
      const ty = 239 + i * 6.370
      return (
        <g key={i}>
          <M x={1212} y={ty} t={row[0]} />
          {row[1] && <M x={1244} y={ty} t={row[1]} a="middle" />}
          <M x={1284} y={ty} t={row[2]} a="start" />
          <M x={1364} y={ty} t={row[3]} />
          <M x={1402} y={ty} t={row[4]} />
          <M x={1458} y={ty} t={row[5]} />
        </g>
      )
    })}
    {t4Sum.map((row, i) => {
      const ty = 360 + i * 6.450
      return (
        <g key={i}>
          <M x={1212} y={ty} t={row[0]} />
          <M x={1276} y={ty} t={row[1]} />
          <M x={1402} y={ty} t={row[2]} />
          <M x={1458} y={ty} t={row[3]} />
        </g>
      )
    })}
    {["钢", "管", "小", "计"].map((t, i) => (
      <Txt key={t} x={1194} y={364 + i * 12} t={t} s={6.500} a="middle" />
    ))}
    <Txt x={1188} y={419} t="钢材合计" s={6} />
    <M x={1402} y={420} t="6538" />
    <M x={1458} y={420} t="153448.43" />
    {t4Balls.map((row, i) => {
      const ty = 431 + i * 6.470
      return (
        <g key={i}>
          <M x={1212} y={ty} t={row[0]} />
          <M x={1221} y={ty} t={row[1]} a="start" />
          <M x={1364} y={ty} t={row[2]} />
          <M x={1402} y={ty} t={row[3]} />
          <M x={1458} y={ty} t={row[4]} />
        </g>
      )
    })}
    {["焊", "接", "球", "小", "计"].map((t, i) => (
      <Txt key={t} x={1194} y={431 + i * 9} t={t} s={6.500} a="middle" />
    ))}
    <Txt x={1194} y={478} t="总 计" s={6.500} a="middle" />
    <M x={1458} y={478} t="222266.85" />

    {/* title block */}
    <L d="M1216 1141h328M1216 1227.500h328" c="#2ee6e6" w={2} />
    <L d="M1216 1140v88M1543.500 1140v88" c="#00e0e0" w={2} />
    <L d="M1477.500 1155h66M1216 1169.500h328M1216 1183.500h130M1381 1183.500h163M1216 1198.500h130M1477.500 1198.500h66M1216 1212.500h130M1477.500 1212.500h66" c="#00d8d8" />
    <L d="M1247.500 1170v58M1282.500 1170v58M1309.500 1170v58M1346.500 1141v87M1381.500 1141v87M1477.500 1141v87M1506.500 1141v14M1506.500 1212v16" c="#00d8d8" />
    <Txt x={1354} y={1152} t="建设" />
    <Txt x={1354} y={1165} t="单位" />
    <Txt x={1221} y={1181} t="审定" />
    <Txt x={1221} y={1195} t="审核" />
    <Txt x={1217} y={1209} t="项目负责" s={6} />
    <Txt x={1217} y={1222} t="专业负责" s={6} />
    <Txt x={1285} y={1181} t="审核" />
    <Txt x={1285} y={1195} t="校对" />
    <Txt x={1285} y={1209} t="设计" />
    <Txt x={1285} y={1222} t="制图" />
    <Txt x={1348} y={1181} t="工程名称" s={6} />
    <Txt x={1348} y={1208} t="图纸名称" s={6} />
    <Txt x={1401} y={1209} t="网壳材料表(二)" s={6} />
    <Txt x={1479} y={1152} t="业务号" s={6} />
    <Txt x={1481} y={1166} t="图别" />
    <Txt x={1481} y={1181} t="图号" />
    <Txt x={1481} y={1195} t="比例" />
    <Txt x={1481} y={1209} t="日期" />
    <Txt x={1481} y={1223} t="第3张" s={6} />
    <Txt x={1515} y={1167} t="钢构" c="#ffff30" />
    <Txt x={1512} y={1181} t="网A-30" c="#ffff30" s={7} />
    <Txt x={1514} y={1195} t="1:100" c="#ffff30" s={7.500} />
    <Txt x={1511} y={1209} t="2003.01" c="#ffff30" s={7} />
    <Txt x={1511} y={1223} t="共 3张" s={6} />

    {/* UCS icon */}
    <L d="M59.500 1207v54M59 1256.500h50M55.500 1251.500h8v9h-8z" c="#e2e2e2" />
    <path d="m61 1190 5 7 5-7M66 1197v7M110 1242l12 12M122 1242l-12 12" stroke="#e2e2e2" strokeWidth="1" fill="none" />
  </svg>
)

// watermark lattice: text starts on a slanted grid, running up to the right
const marks = (() => {
  const out: { x: number; y: number }[] = []
  for (let i = -4; i < 5; i++) {
    for (let j = -3; j < 5; j++) {
      const x = 556 + i * 153 + j * 403
      const y2 = 372 + i * -367 + j * 362
      if (x > -300 && x < 1650 && y2 > 60 && y2 < 1333) out.push({ x, y: y2 })
    }
  }
  return out
})()

const Cmd = ({ className, children }: { className: string; children: ReactNode }) => (
  <div className={`absolute left-[328px] h-[15px] whitespace-pre rounded-[2px] bg-[#4b4b4b] px-[2px] text-[12px] leading-[15px] text-[#c7c7c7] ${Mono} ${className}`}>
    {children}
  </div>
)

const Cell = ({ n, on, w = "w-[24px]" }: { n: string; on?: boolean; w?: string }) => (
  <span className={on ? `flex h-full shrink-0 items-center justify-center bg-[#5690c9] ${w}` : `flex h-full shrink-0 items-center justify-center ${w}`}>
    <Ic n={n} s={17} />
  </span>
)

const Dn = () => (
  <span className="flex h-full w-[14px] shrink-0 items-center justify-center">
    <Caret />
  </span>
)

const SGroup = ({ className, children }: { className: string; children: ReactNode }) => (
  <div className={`flex h-[23px] shrink-0 items-center whitespace-nowrap rounded-[1px] bg-[#3b4453] ${className}`}>{children}</div>
)

export default function App() {
  return (
    <div className="relative flex h-[1333px] w-[1600px] flex-col overflow-hidden bg-[#222933] font-['Noto_Sans','Noto_Sans_CJK_SC',sans-serif] text-[#d8d8d8]">
      <div className="h-[2px] bg-[#0d90d6]" />

      {/* title bar */}
      <div className="flex h-[22px] shrink-0 items-center whitespace-nowrap pr-[11px]">
        <div className="flex w-[585px] shrink-0 items-center">
          <svg className="ml-[9px]" width="15" height="17" viewBox="0 0 15 17" fill="#d6312f">
            <path d="M9 0h4l2 17h-4l-.5-4H6l-2 4H0zM9.800 4 7.500 10h3z" />
          </svg>
          <span className="ml-[5px] mr-[15px]">
            <Caret />
          </span>
          <div className="flex w-[158px] items-center justify-between">
            <Ic n="new" /><Ic n="open" /><Ic n="save" /><Ic n="saveas" /><Ic n="plot" /><Ic n="copy" /><Ic n="print" />
          </div>
          <span className="ml-[6px]"><Ic n="undo" /></span>
          <span className="ml-[4px]"><Caret /></span>
          <span className="ml-[5px]"><Ic n="undodim" /></span>
          <span className="ml-[4px]"><Caret dim /></span>
          <span className="ml-[7px] flex flex-col items-center gap-[1px]"><span className="h-px w-[7px] bg-[#d8d8d8]" /><Caret /></span>
          <span className="ml-[8px]"><Ic n="share" /></span>
          <span className="ml-[2px] text-[12px] text-[#9fd0f2]">共享</span>
        </div>
        <span className="text-[12px] text-[#e4e4e4]">Autodesk AutoCAD 2022</span>
        <span className="ml-[16px] text-[12px] text-[#e4e4e4]">G-20x.dwg</span>
        <span className="ml-auto h-0 w-0 border-y-[4px] border-l-[4px] border-y-transparent border-l-[#d8d8d8]" />
        <div className="ml-[5px] flex h-[19px] w-[174px] items-center bg-[#434c5e] pl-[2px] text-[11px] italic text-[#9aa1ad]">键入关键字或短语</div>
        <span className="ml-[4px]"><Ic n="search" s={16} /></span>
        <span className="ml-[7px]"><Ic n="user" s={17} /></span>
        <span className="ml-[4px] text-[12px]">1505999135...</span>
        <span className="ml-[5px]"><Caret /></span>
        <span className="ml-[9px]"><Ic n="cart" s={16} /></span>
        <span className="ml-[6px]"><Ic n="adsk" s={18} /></span>
        <span className="ml-[3px]"><Caret /></span>
        <span className="ml-[9px] h-[17px] w-px bg-[#5a6272]" />
        <span className="ml-[7px]"><Ic n="help" s={18} /></span>
        <span className="ml-[3px]"><Caret /></span>
        <span className="ml-[71px] mt-[10px] h-[2px] w-[7px] bg-[#e4e4e4]" />
        <span className="ml-[12px] h-[12px] w-[12px] border-2 border-t-[3px] border-[#d8d8d8]" />
        <svg className="ml-[11px]" width="12" height="12" viewBox="0 0 12 12" stroke="#eee" strokeWidth="1.500"><path d="m1 1 10 10M11 1 1 11" /></svg>
      </div>

      {/* menu bar */}
      <div className="flex h-[22px] shrink-0 items-center pl-[17px] text-[12px] text-[#d5d5d5]">
        <div className="flex gap-[23.5px]">
          {menus.map((m) => (
            <span key={m} className="whitespace-nowrap">{m}</span>
          ))}
        </div>
        <span className="ml-auto mt-[8px] h-[2px] w-[7px] bg-[#e4e4e4]" />
        <svg className="ml-[7px]" width="13" height="13" viewBox="0 0 13 13" fill="none" stroke="#d8d8d8" strokeWidth="1.200"><path d="M1 4h8v8H1zM4 4V1h8v8H9" /></svg>
        <svg className="ml-[6px] mr-[6px]" width="11" height="11" viewBox="0 0 12 12" stroke="#eee" strokeWidth="1.500"><path d="m1 1 10 10M11 1 1 11" /></svg>
      </div>
      <div className="h-[3px] shrink-0 bg-[#3b4453]" />

      {/* file tabs */}
      <div className="flex h-[25px] shrink-0 items-end pl-[25px] pb-[1px]">
        {tabs.map((t) => (
          <div
            key={t}
            className={
              t === "G-20x*"
                ? "relative flex h-[23px] w-[120px] shrink-0 items-center rounded-t-[8px] bg-[#3b4453] pl-[10px] text-[12px] font-bold text-[#f2f2f2]"
                : "relative flex h-[23px] w-[120px] shrink-0 items-center rounded-t-[8px] border-r-[3px] border-[#222933] bg-[#2f3745] pl-[10px] text-[12px] text-[#c5c9d0]"
            }
          >
            {t}
            {t !== "开始" && <span className="absolute right-[12px] top-[2px] text-[14px] font-bold text-[#bfc4cc]">✕</span>}
          </div>
        ))}
        <span className="ml-[4px] flex h-[18px] w-[22px] items-center justify-center rounded-b-[5px] bg-[#2f3745] text-[16px] font-bold leading-none text-[#aeb4bd]">+</span>
      </div>

      {/* toolbars */}
      <div className="flex h-[56px] shrink-0 flex-col gap-[1px] bg-[#3b4453] pl-[4px] pr-[8px] pt-[2px]">
        <div className="flex gap-[2px]">
          <Group className="w-[629px] pl-[1px]">
            <Handle />
            <Tools items={["new", "open", "save", "|", "print", "preview", "plot", "globe", "|", "cut", "copy", "paste", "matchp", "bedit", "|", "undo", "^", "redo", "^", "|", "pan", "zoomrt", "zoomwin", "zoomprev", "|", "props", "design", "tool", "sheet", "markup", "calc", "|", "help"]} />
          </Group>
          <Group className="w-[391px] pl-[1px]">
            <Handle />
            <Tools items={["layer"]} />
            <div className="relative flex h-[21px] w-[292px] shrink-0 items-center gap-[2px] bg-white pl-[3px] text-[13px] text-[#222]">
              <Ic n="bulb" /><Ic n="sun" /><Ic n="vpfrz" /><Ic n="lock" />
              <span className="ml-[1px] h-[13px] w-[13px] border border-[#222]" />
              <span className="ml-[3px]">0</span>
              <span className="absolute right-[3px] top-[5px]"><Chevron /></span>
            </div>
            <Tools items={["lyrme", "lyrprev", "lyrlock"]} />
          </Group>
          <Group className="flex-1 gap-[3px] border-transparent pl-[1px]">
            <Handle />
            <Combo className="-ml-[6px] w-[145px] pl-[2px]">
              <span className="h-[15px] w-[15px] border border-[#222]" />
              <span className="ml-[6px]">ByLayer</span>
            </Combo>
            <span className="h-[19px] w-px shrink-0 bg-white" />
            <Combo className="w-[154px] pl-[4px]">
              <span className="h-[2px] w-[58px] bg-[#555]" />
              <span className="ml-[6px]">ByLayer</span>
            </Combo>
            <span className="h-[19px] w-px shrink-0 bg-white" />
            <Combo className="w-[120px] pl-[5px]">
              <span className="h-[2px] w-[34px] bg-[#555]" />
              <span className="ml-[5px]">ByLayer</span>
            </Combo>
            <span className="h-[19px] w-px shrink-0 bg-white" />
            <Combo className="w-[116px] bg-[#f5f5f5] pl-[11px] text-[#9a9a9a]">ByColor</Combo>
          </Group>
        </div>
        <div className="flex gap-[2px]">
          <Group className="w-[76px] pl-[1px]">
            <Handle />
            <Tools items={["matchm", "checkm", "lstate"]} />
          </Group>
          <Group className="w-[624px] pl-[1px]">
            <Handle />
            <Tools items={["dimlin", "dimali", "dimarc", "dimord", "|", "dimrad", "dimjog", "dimdia", "dimang", "|", "dimq", "dimbase", "dimcont", "dimspace", "dimbreak", "|", "tol", "center", "inspect", "jogline", "|", "dimed", "dimtxt", "dimup", "|"]} />
            <div className="relative ml-[-1px] flex h-[21px] w-[117px] shrink-0 items-center bg-white pl-[19px] text-[12px] text-[#2a2a2a]">
              ISO-25
              <span className="absolute right-[3px] top-[5px]"><Chevron /></span>
            </div>
            <Tools items={["dimsty"]} />
          </Group>
          <Group className="w-[472px] pl-[1px]">
            <Handle />
            <Tools items={["uni1", "uni2", "uni3", "|", "stretchb", "movef", "scalef", "delf", "rotf", "facetap", "copyf", "colorf", "|", "imprint", "coloreb", "copye", "imprf", "|", "sep3d", "clean", "separate", "shell", "checks"]} />
          </Group>
        </div>
      </div>

      {/* work area */}
      <div className="flex h-[1153px] shrink-0">
        <div className="flex w-[32px] shrink-0 bg-[#3b4453] pl-[4px]">
          <div className="mt-[2px] flex h-[434px] w-[23px] flex-col items-center border border-[#2a3240] pt-[1px]">
            <span className="h-[4px] w-[14px] shrink-0 border-y border-dotted border-y-[#8a93a0]" />
            {["line", "xline", "pline", "polygon", "rect", "arc", "circle", "cloud", "spline", "ellipse", "ellarc", "insert", "block", "point", "hatch", "gradient", "region", "table", "text", "addsel"].map((n) => (
              <span key={n} className="flex h-[21.4px] shrink-0 items-center justify-center"><Ic n={n} s={19} /></span>
            ))}
          </div>
        </div>

        <div className="relative flex-1 overflow-hidden bg-black">
          {/* drawing layer: children are placed in sheet coordinates */}
          <div className="absolute left-[-32px] top-[-129px] h-[1333px] w-[1600px]">
            <div className="absolute left-[1426px] top-[152px] h-[116px] w-[116px] rounded-full border-[9px] border-[#2b2b2b]" />
            <CadLines />
            <div className="absolute left-[217px] top-[205px] text-[7.5px] font-bold leading-[11px] text-[#19e6e6]">网壳材料表</div>
            <div className="absolute left-[594px] top-[205px] text-[7.5px] font-bold leading-[11px] text-[#19e6e6]">网壳材料表</div>
            <div className="absolute left-[951px] top-[205px] text-[7.5px] font-bold leading-[11px] text-[#19e6e6]">网壳材料表</div>
            <div className="absolute left-[1279px] top-[208px] text-[7.5px] font-bold leading-[11px] text-[#19e6e6]">网壳材料表</div>
            {tableData.map((d) => (
              <MatTable key={d.pos} pos={d.pos} data={d} />
            ))}

            {/* view cube */}
            <span className="absolute left-[1475px] top-[144px] text-[17px] leading-[24px] text-[#8c8c8c]">北</span>
            <span className="absolute left-[1475px] top-[253px] text-[17px] leading-[24px] text-[#8c8c8c]">南</span>
            <span className="absolute left-[1421px] top-[198px] text-[17px] leading-[24px] text-[#8c8c8c]">西</span>
            <span className="absolute left-[1530px] top-[198px] text-[17px] leading-[24px] text-[#8c8c8c]">东</span>
            <div className="absolute left-[1459px] top-[184px] flex h-[49px] w-[50px] items-center justify-center bg-[#a2a2a2]/90">
              <span className="flex h-[32px] w-[32px] items-center justify-center bg-[#8f8f8f] text-[30px] leading-none text-[#6d6d6d]">上</span>
            </div>
            <div className="absolute left-[1462px] top-[294px] flex h-[16px] w-[45px] items-center gap-[3px] rounded-[4px] bg-[#6b727c] pl-[3px] text-[11px] leading-none text-[#9aa2ac]">
              WCS
              <span className="h-0 w-0 border-x-[3.5px] border-t-[4px] border-x-transparent border-t-[#8d95a0]" />
            </div>

            {/* command line */}
            <Cmd className="top-[1200px]">{"命令: '_.zoom"}</Cmd>
            <Cmd className="top-[1219px]">{"指定窗口的角点，输入比例因子 (nX 或 nXP)，或者"}</Cmd>
            <Cmd className="top-[1239px]">{"[全部(A)/中心(C)/动态(D)/范围(E)/上一个(P)/比例(S)/窗口(W)/对象(O)] <实时>: _e"}</Cmd>
            <div className="absolute left-[268px] top-[1257px] flex h-[24px] w-[1061px] items-center bg-[#2b3340]">
              <span className="ml-[4px] h-[17px] w-[5px] border-x-2 border-dotted border-x-[#aab0ba]" />
              <svg className="ml-[5px]" width="10" height="10" viewBox="0 0 10 10" stroke="#cfcfcf" strokeWidth="1.200"><path d="m1 1 8 8M9 1 1 9" /></svg>
              <svg className="ml-[7px]" width="16" height="16" viewBox="0 0 16 16" fill="#cfcfcf"><path d="M14 1a4 4 0 0 0-4 5L2 13l1 2 8-7a4 4 0 0 0 4-5l-3 2-1-1z" /></svg>
              <div className="relative ml-[5px] flex h-full flex-1 items-center bg-[#adadad] pl-[4px]">
                <span className="flex h-[14px] w-[15px] items-center border border-[#555] bg-[#d2d2d2] text-[8px] leading-none text-[#333]">&gt;_</span>
                <span className="ml-[2px]"><span className="inline-block h-0 w-0 border-x-[3.5px] border-t-[4px] border-x-transparent border-t-[#444]" /></span>
                <span className="ml-[8px] text-[12px] italic text-[#6c6c6c]">键入命令</span>
                <span className="absolute right-[5px] top-[10px] h-0 w-0 border-x-[4px] border-b-[5px] border-x-transparent border-b-[#555]" />
              </div>
            </div>
          </div>
        </div>

        <div className="flex w-[35px] shrink-0 bg-[#3b4453] pl-[1px]">
          <div className="mt-[2px] flex h-[396px] w-[27px] flex-col items-center border border-[#2a3240] pt-[1px]">
            <span className="h-[4px] w-[14px] shrink-0 border-y border-dotted border-y-[#8a93a0]" />
            {["erase", "mcopy", "mirror", "offset", "array", "move", "rotate", "scale", "stretch", "trim", "extend", "breakpt", "breakm", "join", "chamfer", "fillet", "blend", "explode"].map((n) => (
              <span key={n} className="flex h-[21.45px] shrink-0 items-center justify-center"><Ic n={n} s={19} /></span>
            ))}
          </div>
        </div>
      </div>

      {/* layout tabs */}
      <div className="flex h-[18px] shrink-0 items-start border-t border-[#4a5262] pl-[15px] text-[12px] leading-[16px]">
        <span className="flex h-[16px] w-[46px] items-center justify-center rounded-b-[5px] bg-[#3b4453] font-bold text-[#f0f0f0]">模型</span>
        <span className="ml-[3px] flex h-[16px] w-[48px] items-center justify-center rounded-b-[5px] bg-[#2f3745] text-[#c5c9d0]">布局1</span>
        <span className="ml-[3px] flex h-[16px] w-[18px] items-center justify-center rounded-b-[5px] bg-[#2f3745] text-[15px] font-bold text-[#aeb4bd]">+</span>
      </div>

      {/* status bar */}
      <div className="mt-[3px] flex h-[23px] shrink-0 pl-[276px] text-[12px] text-[#e0e0e0]">
        <SGroup className="w-[262px] justify-end pr-[4px] text-[11.7px]">2.952275E+05, -1.54663E+04, 0.00000000</SGroup>
        <SGroup className="ml-[3px] w-[29px] justify-center">模型</SGroup>
        <SGroup className="ml-[4px] w-[60px] pl-[1px]">
          <Cell n="grid" /><Cell n="snap" /><Dn />
        </SGroup>
        <SGroup className="ml-[6px] w-[211px]">
          <Cell n="infer" /><Cell n="dyn" on /><Cell n="ortho" on /><Cell n="polar" /><Dn /><Cell n="iso" /><Dn /><Cell n="angle" /><Cell n="objsnap" on /><Dn />
        </SGroup>
        <SGroup className="ml-[2px] w-[112px]">
          <Cell n="lweight" /><Cell n="transp" on /><Cell n="selcycle" /><Cell n="g3d" /><Dn />
        </SGroup>
        <SGroup className="ml-[2px] w-[101px]">
          <Cell n="ucsd" /><Cell n="gizmo" /><Dn /><Cell n="gizmoa" on /><Dn />
        </SGroup>
        <SGroup className="ml-[4px] w-[141px]">
          <Cell n="annoa" on /><Cell n="anno" /><Cell n="annoc" />
          <span className="w-[55px] text-center text-[11.5px]">1:1 / 100%</span>
          <Dn />
        </SGroup>
        <SGroup className="ml-[4px] w-[39px]">
          <Cell n="gear" /><Dn />
        </SGroup>
        <SGroup className="ml-[1px] w-[21px] justify-center">
          <Ic n="plus" s={15} />
        </SGroup>
        <SGroup className="ml-[5px] w-[93px]">
          <Cell n="units" />
          <span className="ml-[4px] flex-1">小数</span>
          <Dn />
        </SGroup>
        <SGroup className="ml-[3px] w-[22px] justify-center">
          <Ic n="qprop" s={17} />
        </SGroup>
        <SGroup className="ml-[4px] w-[61px]">
          <Cell n="lockui" /><Dn /><Cell n="isolate" />
        </SGroup>
        <SGroup className="ml-[5px] w-[22px] justify-center !bg-[#5690c9]">
          <Ic n="hwacc" s={17} />
        </SGroup>
        <SGroup className="ml-[2px] w-[50px]">
          <Cell n="iconic" w="w-[25px]" /><Cell n="perf" w="w-[25px]" />
        </SGroup>
        <SGroup className="ml-[2px] w-[51px]">
          <Cell n="fullscr" w="w-[25px]" /><Cell n="menu" w="w-[25px]" />
        </SGroup>
      </div>
      <div className="mt-auto h-[2px] shrink-0 bg-[#0d90d6]" />

      {/* site watermark laid over the whole picture */}
      <div className="pointer-events-none absolute inset-0 overflow-hidden">
        {marks.map((m, i) => (
          <span
            key={i}
            className="absolute origin-left -rotate-[43deg] whitespace-nowrap text-[31px] font-bold leading-none text-white/[0.14]"
            style={{ left: m.x, top: m.y }}
          >
            知末网www.znzmo.com
          </span>
        ))}
        <span className="absolute left-[1406px] top-[1188px] text-[62px] font-bold leading-[90px] tracking-[-1px] text-white/75">知末</span>
        <span className="absolute left-[1361px] top-[1275px] font-['Liberation_Sans',sans-serif] text-[32px] font-bold leading-[37px] text-white/90">ID: 1172124155</span>
      </div>
    </div>
  )
}
